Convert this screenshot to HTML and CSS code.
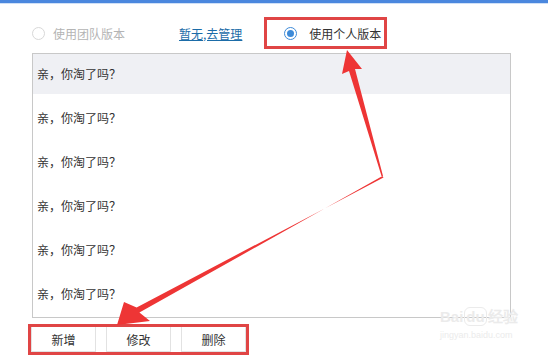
FILE: index.html
```html
<!DOCTYPE html>
<html lang="zh-CN">
<head>
    <meta charset="UTF-8">
    <meta name="viewport" content="width=device-width, initial-scale=1.0">
    <title>快捷短语</title>
    <link rel="stylesheet" href="styles.css">
</head>
<body>
    <div class="topbar"></div>
    <div class="options">
        <label class="option disabled">
            <span class="radio"></span>
            <span>使用团队版本</span>
        </label>
        <a class="manage" href="#">暂无,去管理</a>
        <label class="option boxed">
            <span class="radio checked"></span>
            <span>使用个人版本</span>
        </label>
    </div>

    <ul class="list">
        <li class="active">亲，你淘了吗？</li>
        <li>亲，你淘了吗？</li>
        <li>亲，你淘了吗？</li>
        <li>亲，你淘了吗？</li>
        <li>亲，你淘了吗？</li>
        <li>亲，你淘了吗？</li>
    </ul>

    <div class="actions">
        <button>新增</button>
        <button>修改</button>
        <button>删除</button>
    </div>

    <!-- 标注箭头 -->
    <svg class="arrows" width="548" height="358" viewBox="0 0 548 358">
        <polygon points="347,50 362,69 355,69 383,176 381.5,176 349,71 342,74" />
        <polygon points="117,325 124,302 136.6,307.4 383.5,177.5 382.5,176 139.4,312.6 150,321" />
    </svg>

    <div class="watermark">
        <div class="wm-logo">Bai<span class="wm-du">du</span>经验</div>
        <div class="wm-url">jingyan.baidu.com</div>
    </div>
</body>
</html>
```

FILE: styles.css
```css
body {
    margin: 0;
    background: #fff;
    font-family: "Noto Sans CJK SC", "Microsoft YaHei", sans-serif;
    font-size: 12px;
    color: #333;
    position: relative;
    width: 548px;
    height: 358px;
    overflow: hidden;
}
.topbar {
    height: 3px;
    background: #4a87de;
    border-bottom: 1px solid #cfe0f7;
}
.options {
    display: flex;
    align-items: center;
    height: 32px;
    margin-top: 13px;
}
.option {
    display: flex;
    align-items: center;
    gap: 8px;
    cursor: pointer;
}
.option.disabled {
    margin-left: 32px;
    color: #b4b4b4;
}
.radio {
    width: 11px;
    height: 11px;
    border: 1px solid #d8d8d8;
    border-radius: 50%;
    position: relative;
    background: #fff;
}
.radio.checked {
    border-color: #3d8ad8;
}
.radio.checked::after {
    content: "";
    position: absolute;
    left: 2px;
    top: 2px;
    width: 7px;
    height: 7px;
    border-radius: 50%;
    background: #3d8ad8;
}
.manage {
    margin-left: 54px;
    color: #1b6ca8;
    text-decoration: underline;
}
.option.boxed {
    margin-left: 22px;
    height: 26px;
    padding: 0 3px 0 17px;
    gap: 12px;
    border: 3px solid #e04545;
    color: #333;
}
.list {
    list-style: none;
    margin: 4px 0 0 32px;
    padding: 0;
    width: 477px;
    height: 263px;
    border: 1px solid #c8c8c8;
}
.list li {
    height: 40px;
    line-height: 40px;
    margin-bottom: 4px;
    padding-left: 4px;
}
.list li.active {
    background: #eff0f4;
}
.actions {
    display: flex;
    gap: 10px;
    margin: 6px 0 0 28px;
    width: 215px;
    border: 3px solid #e04545;
}
.actions button {
    width: 65px;
    height: 25px;
    padding: 0;
    border: 1px solid #e2e2e2;
    border-top: none;
    background: #fff;
    color: #333;
    font-family: inherit;
    font-size: 12px;
    cursor: pointer;
}
.arrows {
    position: absolute;
    left: 0;
    top: 0;
    pointer-events: none;
}
.arrows polygon {
    fill: #ee3535;
}
.watermark {
    position: absolute;
    left: 440px;
    top: 305px;
    color: #ebebeb;
    font-family: "Liberation Sans", sans-serif;
    pointer-events: none;
}
.wm-logo {
    font-size: 15px;
    font-weight: bold;
}
.wm-du {
    border: 1px solid #ebebeb;
    border-radius: 6px;
    padding: 0 1px;
    margin: 0 1px;
}
.wm-url {
    font-size: 9px;
    margin-top: 4px;
}
```
